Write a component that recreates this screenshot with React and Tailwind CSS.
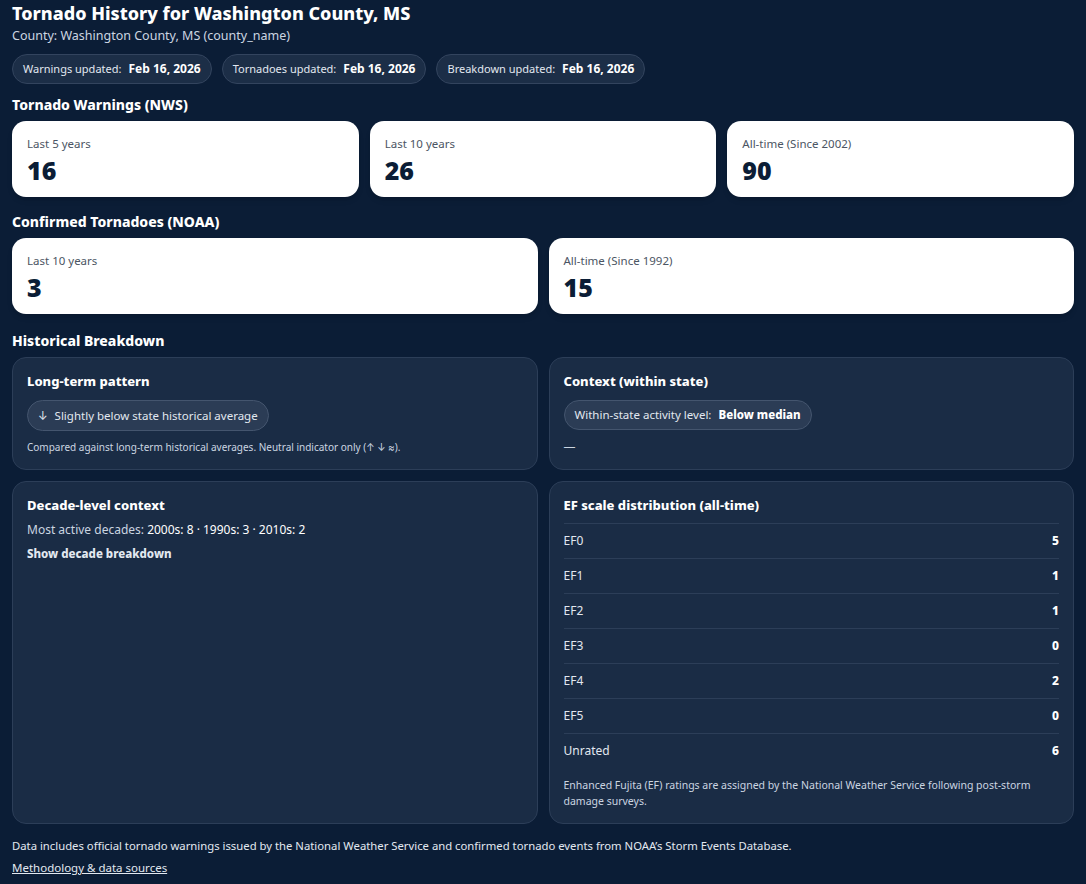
import React from 'react';

const warnings = [
    { label: 'Last 5 years', value: 16 },
    { label: 'Last 10 years', value: 26 },
    { label: 'All-time (Since 2002)', value: 90 },
];

const tornadoes = [
    { label: 'Last 10 years', value: 3 },
    { label: 'All-time (Since 1992)', value: 15 },
];

const efRows = [
    ['EF0', 5],
    ['EF1', 1],
    ['EF2', 1],
    ['EF3', 0],
    ['EF4', 2],
    ['EF5', 0],
    ['Unrated', 6],
];

const updates = [
    ['Warnings updated:', 'Feb 16, 2026'],
    ['Tornadoes updated:', 'Feb 16, 2026'],
    ['Breakdown updated:', 'Feb 16, 2026'],
];

function StatCard({ label, value }) {
    return (
        <div className="bg-white rounded-[14px] px-[15px] pt-[15px] h-[76px] shadow-md">
            <div className="text-[11.5px] leading-[16px] text-[#4b5563]">{label}</div>
            <div className="mt-[3px] text-[25px] leading-[30px] font-black text-[#0b1d36]">{value}</div>
        </div>
    );
}

function Panel({ title, children, className = '' }) {
    return (
        <div className={`bg-[#1a2c45] border border-[#2c3e58] rounded-[14px] px-[14px] pt-[14px] pb-[14px] ${className}`}>
            <h4 className="text-[13px] leading-[18px] font-extrabold text-white">{title}</h4>
            {children}
        </div>
    );
}

function SectionTitle({ children }) {
    return <h3 className="text-[14px] leading-[18px] font-extrabold text-white mb-[7px]">{children}</h3>;
}

export default function App() {
    return (
        <div className="min-h-[884px] bg-[#0b1d36] text-white px-[12px] pt-[1px] pb-[10px]" style={{ fontFamily: '"Noto Sans", Inter, sans-serif' }}>
            <h1 className="text-[18px] leading-[24px] font-extrabold">Tornado History for Washington County, MS</h1>
            <p className="text-[12.5px] leading-[18px] text-[#cbd5e1] mt-[2px]">County: Washington County, MS (county_name)</p>

            <div className="flex gap-[10px] mt-[9px]">
                {updates.map(([k, v]) => (
                    <div key={k} className="h-[30px] flex items-center px-[10px] rounded-full bg-[#1c2e47] border border-[#33445e] text-[12px] text-[#e2e8f0]">
                        <span className="text-[11px]">{k}</span>
                        <span className="ml-[7px] font-bold text-white">{v}</span>
                    </div>
                ))}
            </div>

            <div className="mt-[12px]">
                <SectionTitle>Tornado Warnings (NWS)</SectionTitle>
                <div className="grid grid-cols-3 gap-[11px]">
                    {warnings.map(w => <StatCard key={w.label} {...w} />)}
                </div>
            </div>

            <div className="mt-[16px]">
                <SectionTitle>Confirmed Tornadoes (NOAA)</SectionTitle>
                <div className="grid grid-cols-2 gap-[11px]">
                    {tornadoes.map(t => <StatCard key={t.label} {...t} />)}
                </div>
            </div>

            <div className="mt-[18px]">
                <SectionTitle>Historical Breakdown</SectionTitle>
                <div className="grid grid-cols-2 gap-[11px]">
                    <Panel title="Long-term pattern">
                        <div className="mt-[10px] inline-flex items-center h-[31px] px-[10px] rounded-full bg-[#2b3c55] border border-[#44556e] text-[11.5px] text-[#e2e8f0]">
                            <span className="mr-[7px]">↓</span>Slightly below state historical average
                        </div>
                        <p className="mt-[9px] text-[10px] leading-[15px] text-[#cbd5e1]">
                            Compared against long-term historical averages. Neutral indicator only (↑ ↓ ≈).
                        </p>
                    </Panel>
                    <Panel title="Context (within state)">
                        <div className="mt-[10px] inline-flex items-center h-[30px] px-[10px] rounded-full bg-[#2b3c55] border border-[#44556e] text-[11.5px] text-[#e2e8f0]">
                            <span>Within-state activity level:</span>
                            <span className="ml-[7px] font-extrabold text-white">Below median</span>
                        </div>
                        <div className="mt-[9px] text-[12px] leading-[16px] text-[#cbd5e1]">—</div>
                    </Panel>

                    <Panel title="Decade-level context">
                        <p className="mt-[7px] text-[12px] leading-[18px] text-[#cbd5e1]">
                            Most active decades: <span className="text-white">2000s: 8 · 1990s: 3 · 2010s: 2</span>
                        </p>
                        <button className="mt-[6px] text-[11.5px] font-extrabold text-[#e2e8f0]">Show decade breakdown</button>
                    </Panel>
                    <Panel title="EF scale distribution (all-time)">
                        <div className="mt-[9px]">
                            {efRows.map(([k, v]) => (
                                <div key={k} className="h-[35px] flex items-center justify-between border-t border-[#2c3e58] text-[12px]">
                                    <span className="text-[#e2e8f0]">{k}</span>
                                    <span className="font-extrabold text-white">{v}</span>
                                </div>
                            ))}
                        </div>
                        <p className="mt-[9px] text-[10.5px] leading-[16px] text-[#cbd5e1] pr-[16px]">
                            Enhanced Fujita (EF) ratings are assigned by the National Weather Service following post-storm damage surveys.
                        </p>
                    </Panel>
                </div>
            </div>

            <p className="mt-[14px] text-[11.3px] leading-[16px] text-[#e2e8f0]">
                Data includes official tornado warnings issued by the National Weather Service and confirmed tornado events from NOAA’s Storm Events Database.
            </p>
            <a href="#" className="inline-block mt-[4px] text-[11.5px] leading-[16px] text-[#e2e8f0] underline">Methodology &amp; data sources</a>
        </div>
    );
}
